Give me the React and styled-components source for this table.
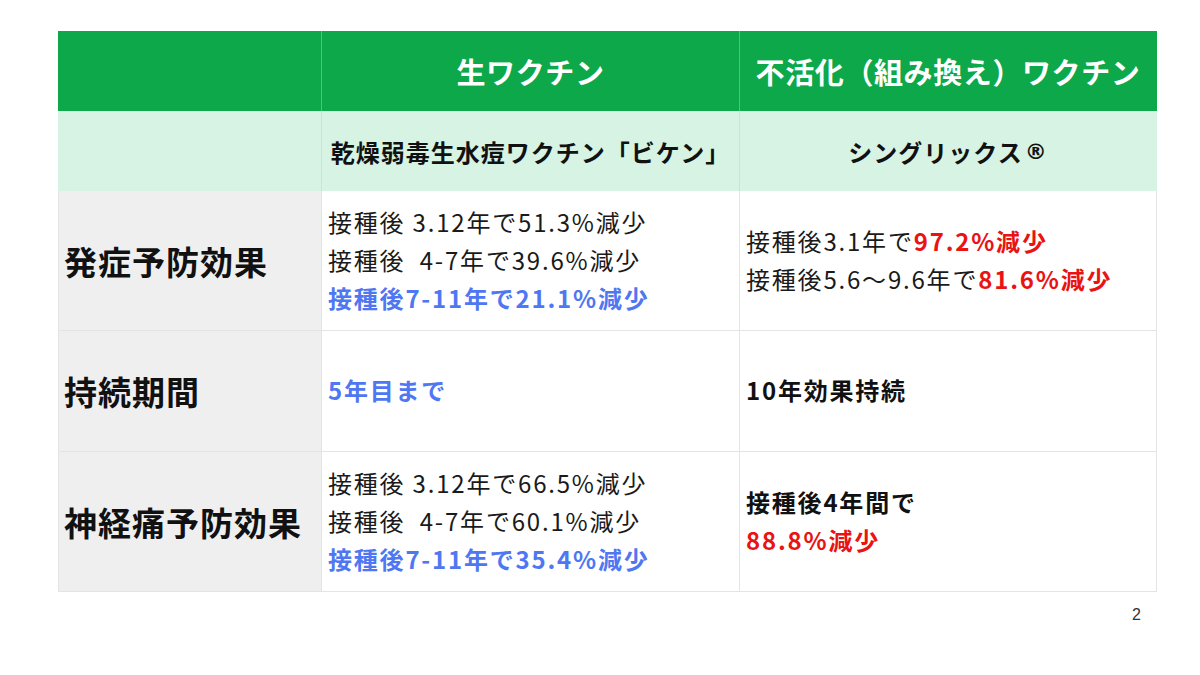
import React from "react";
import styled, { createGlobalStyle } from "styled-components";

const GlobalStyle = createGlobalStyle`
  html, body {
    margin: 0;
    padding: 0;
    background: #fff;
  }
  body {
    font-family: "Noto Sans CJK JP", "Noto Sans", sans-serif;
    color: #1a1a1a;
  }
`;

const rows = [
  {
    label: "発症予防効果",
    live: [
      { text: "接種後 3.12年で51.3%減少" },
      { text: "接種後  4-7年で39.6%減少" },
      { text: "接種後7-11年で21.1%減少", tone: "blue" },
    ],
    recombinant: [
      [{ text: "接種後3.1年で" }, { text: "97.2%減少", tone: "red" }],
      [{ text: "接種後5.6〜9.6年で" }, { text: "81.6%減少", tone: "red" }],
    ],
  },
  {
    label: "持続期間",
    live: [{ text: "5年目まで", tone: "blue" }],
    recombinant: [[{ text: "10年効果持続", tone: "bold" }]],
  },
  {
    label: "神経痛予防効果",
    live: [
      { text: "接種後 3.12年で66.5%減少" },
      { text: "接種後  4-7年で60.1%減少" },
      { text: "接種後7-11年で35.4%減少", tone: "blue" },
    ],
    recombinant: [
      [{ text: "接種後4年間で", tone: "bold" }],
      [{ text: "88.8%減少", tone: "red" }],
    ],
  },
];

export default function App() {
  return (
    <Page>
      <GlobalStyle />
      <Table>
        <HeadCell />
        <HeadCell>生ワクチン</HeadCell>
        <HeadCell>不活化（組み換え）ワクチン</HeadCell>

        <SubCell />
        <SubCell>乾燥弱毒生水痘ワクチン「ビケン」</SubCell>
        <SubCell>
          シングリックス<Mark>®</Mark>
        </SubCell>

        {rows.map((row) => (
          <React.Fragment key={row.label}>
            <LabelCell>{row.label}</LabelCell>
            <BodyCell>
              {row.live.map((line, i) => (
                <Line key={i} $tone={line.tone}>
                  {line.text}
                </Line>
              ))}
            </BodyCell>
            <BodyCell>
              {row.recombinant.map((parts, i) => (
                <Line key={i}>
                  {parts.map((p, j) => (
                    <Span key={j} $tone={p.tone}>
                      {p.text}
                    </Span>
                  ))}
                </Line>
              ))}
            </BodyCell>
          </React.Fragment>
        ))}
      </Table>
      <PageNumber>2</PageNumber>
    </Page>
  );
}

const Page = styled.div`
  width: 1200px;
  height: 675px;
  box-sizing: border-box;
  padding: 31px 0 0 58px;
`;

const Table = styled.div`
  display: grid;
  grid-template-columns: 264px 418px 417px;
  grid-template-rows: 80px 80px 140px 121px 140px;
  width: 1099px;
`;

const Cell = styled.div`
  box-sizing: border-box;
  display: flex;
  align-items: center;
  border-right: 1px solid #e4e4e4;
  border-bottom: 1px solid #e4e4e4;
  &:nth-child(3n + 1) {
    border-left: 1px solid #e4e4e4;
  }
`;

const HeadCell = styled(Cell)`
  background: #0ca84a;
  color: #fff;
  justify-content: center;
  font-size: 29px;
  font-weight: 700;
  letter-spacing: 0.6px;
  border-right-color: #4fc27c;
  border-bottom: none;
  &:nth-child(3n + 1) {
    border-left-color: #0ca84a;
  }
  &:nth-child(3) {
    border-right-color: #0ca84a;
  }
`;

const SubCell = styled(Cell)`
  background: #d6f3e3;
  color: #111;
  justify-content: center;
  font-size: 24px;
  font-weight: 700;
  letter-spacing: 1px;
  border-right-color: #c6e6d4;
  border-bottom: none;
  &:nth-child(3n + 1) {
    border-left-color: #d6f3e3;
  }
  &:nth-child(6) {
    border-right-color: #d6f3e3;
  }
`;

const Mark = styled.span`
  font-family: "DejaVu Sans", sans-serif;
  font-size: 22px;
  font-weight: 700;
  margin-left: 2px;
`;

const LabelCell = styled(Cell)`
  background: #efefef;
  padding-left: 5px;
  font-size: 33px;
  font-weight: 700;
  letter-spacing: 1px;
  color: #111;
`;

const BodyCell = styled(Cell)`
  background: #fff;
  flex-direction: column;
  align-items: flex-start;
  justify-content: center;
  padding: 0 6px 2px 6px;
`;

const toneColor = {
  blue: "#5077f2",
  red: "#ea1313",
  bold: "#111",
};

const Line = styled.div`
  font-size: 24px;
  line-height: 38px;
  letter-spacing: 1.8px;
  white-space: pre;
  color: ${(p) => (p.$tone ? toneColor[p.$tone] : "#1a1a1a")};
  font-weight: ${(p) => (p.$tone ? 700 : 400)};
`;

const Span = styled.span`
  color: ${(p) => (p.$tone ? toneColor[p.$tone] : "#1a1a1a")};
  font-weight: ${(p) => (p.$tone ? 700 : 400)};
`;

const PageNumber = styled.div`
  width: 1099px;
  box-sizing: border-box;
  padding: 14px 16px 0 0;
  text-align: right;
  font-family: "Liberation Sans", Arial, sans-serif;
  font-size: 16px;
  color: #333;
`;
